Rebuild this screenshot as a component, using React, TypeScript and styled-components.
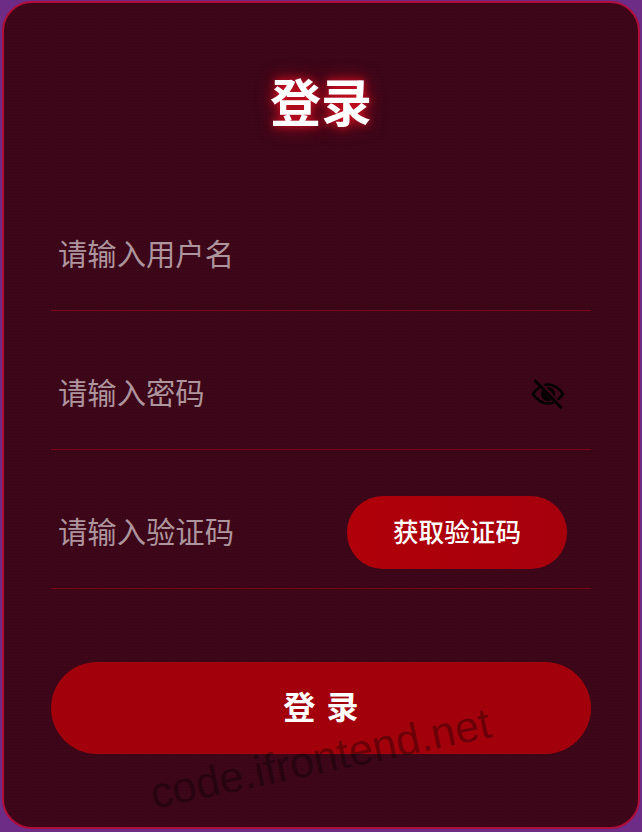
import React from "react";
import styled, { createGlobalStyle } from "styled-components";

const Global = createGlobalStyle`
  html, body { margin: 0; padding: 0; }
  body { background: #6d2c85; font-family: "Noto Sans CJK SC", "Noto Sans", sans-serif; }
`;

const Card = styled.form`
  position: relative;
  box-sizing: border-box;
  width: 638px;
  height: 828px;
  margin: 1px 0 0 2px;
  padding: 0 47px;
  border: 2px solid #b00d3a;
  border-radius: 30px;
  overflow: hidden;
  background-color: #3d0619;
  background-image: radial-gradient(rgba(0, 0, 0, 0.14) 1px, transparent 1px);
  background-size: 3px 3px;
  display: flex;
  flex-direction: column;
`;

const Title = styled.h1`
  margin: 66px 0 0;
  height: 62px;
  font-size: 51px;
  line-height: 62px;
  font-weight: 700;
  color: #fff;
  text-align: center;
  text-shadow: 0 0 8px #d80f20, 0 0 18px rgba(212, 15, 31, 0.7);
`;

const Fields = styled.div`
  margin-top: 69px;
  display: flex;
  flex-direction: column;
`;

const Row = styled.div`
  box-sizing: border-box;
  height: 139px;
  padding: 0 24px 0 7px;
  border-bottom: 1px solid #7a0618;
  display: flex;
  align-items: flex-end;
  &:first-child { height: 111px; }
`;

const RowInner = styled.div`
  flex: 1;
  height: 110px;
  display: flex;
  align-items: center;
  justify-content: space-between;
`;

const Placeholder = styled.span`
  font-size: 29.33px;
  line-height: 40px;
  margin-top: -6px;
  color: #ae949d;
`;

const CodeButton = styled.button`
  width: 220px;
  height: 73px;
  margin-top: -2px;
  border: 0;
  border-radius: 36px;
  background: linear-gradient(90deg, #b0000a, #a6000c);
  color: #fff;
  font-family: inherit;
  font-size: 25.6px;
  font-weight: 500;
  padding: 0 0 4px;
`;

const Submit = styled.button`
  margin-top: 73px;
  width: 100%;
  height: 92px;
  border: 0;
  border-radius: 46px;
  background: #a2000b;
  color: #fff;
  font-family: inherit;
  font-size: 32px;
  font-weight: 700;
  letter-spacing: 2px;
  padding: 0 0 6px 2px;
`;

const Watermark = styled.div`
  position: absolute;
  left: 143px;
  top: 731px;
  font-family: "Liberation Sans", Arial, sans-serif;
  font-size: 43.3px;
  line-height: 48px;
  color: rgba(0, 0, 0, 0.34);
  white-space: nowrap;
  transform: rotate(-12deg);
  transform-origin: center;
  pointer-events: none;
`;

const EyeIcon = styled.svg`
  flex: none;
  margin: 0 2px 0 0;
`;

const EyeOff = () => (
  <EyeIcon width="34" height="34" viewBox="0 0 34 34" fill="none" stroke="#000" strokeWidth="2.6">
    <path d="M2 17C6.5 10.5 11 7.5 17 7.5S27.5 10.5 32 17C27.5 23.5 23 26.5 17 26.5S6.5 23.5 2 17Z" />
    <circle cx="17" cy="17" r="7" fill="#000" stroke="none" />
    <path d="M4.5 2 30 30" stroke="#3d0619" strokeWidth="5" />
    <path d="M3.5 3 30.5 31" strokeWidth="2.6" />
  </EyeIcon>
);

export default function App() {
  return (
    <>
      <Global />
      <Card>
        <Title>登录</Title>
        <Fields>
          <Row>
            <RowInner><Placeholder>请输入用户名</Placeholder></RowInner>
          </Row>
          <Row>
            <RowInner><Placeholder>请输入密码</Placeholder><EyeOff /></RowInner>
          </Row>
          <Row>
            <RowInner>
              <Placeholder>请输入验证码</Placeholder>
              <CodeButton type="button">获取验证码</CodeButton>
            </RowInner>
          </Row>
        </Fields>
        <Submit type="button">登 录</Submit>
        <Watermark>code.ifrontend.net</Watermark>
      </Card>
    </>
  );
}
